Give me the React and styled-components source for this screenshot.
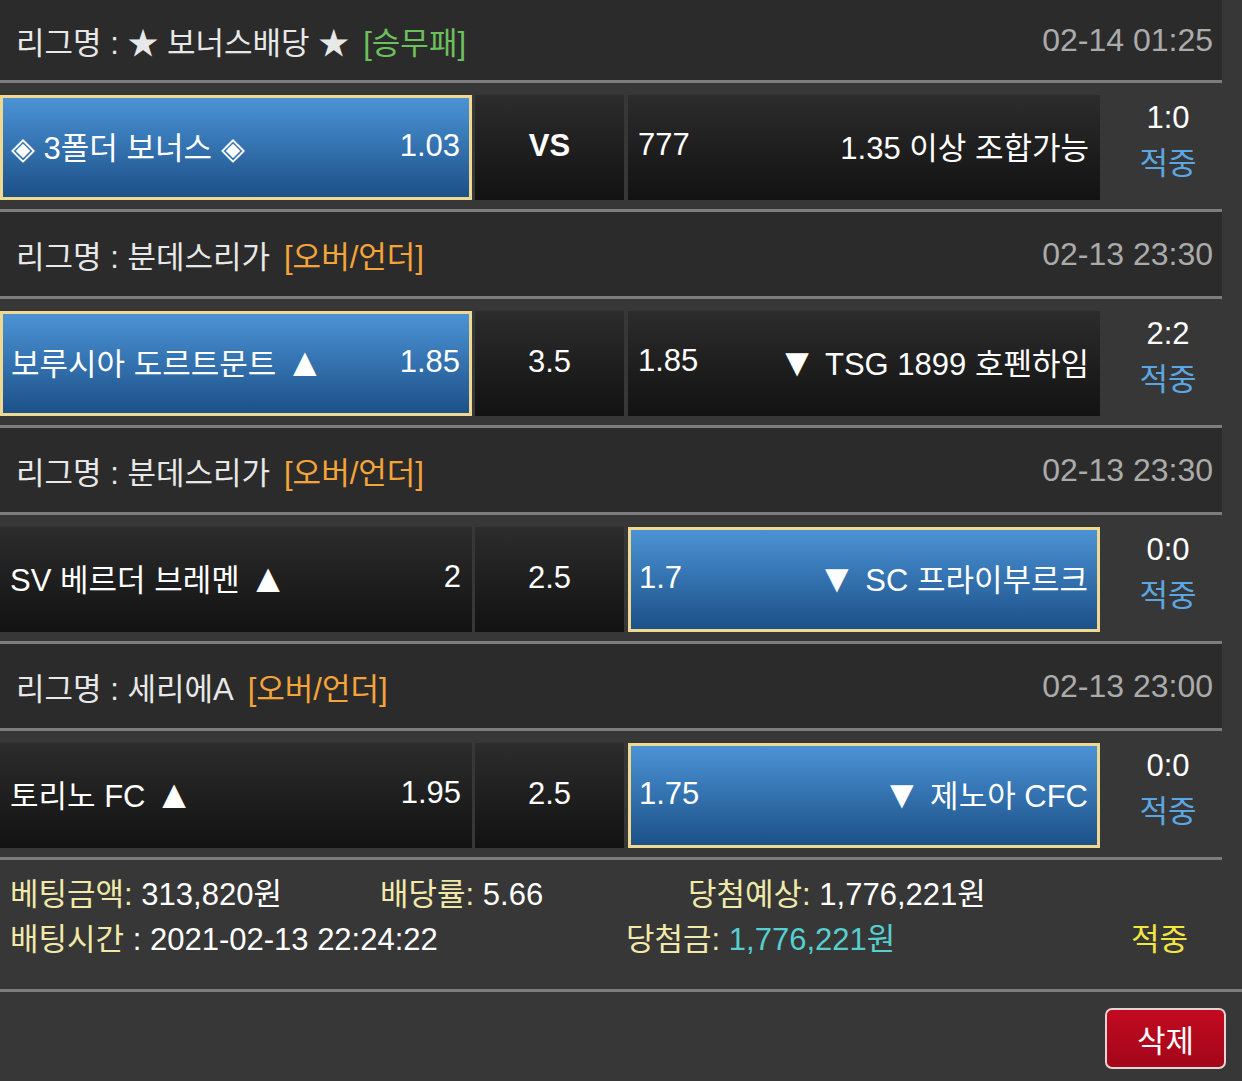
import React from 'react';
import styled, { createGlobalStyle, css } from 'styled-components';

const GlobalStyle = createGlobalStyle`
  body {
    margin: 0;
    background: #373737;
    font-family: "Liberation Sans", "Noto Sans CJK KR", sans-serif;
    color: #fff;
  }
`

const Page = styled.div`
  width: 1242px;
  font-size: 31px;
`

const Board = styled.div`
  width: 1222px;
`

const LeagueHeader = styled.div`
  display: flex;
  align-items: center;
  justify-content: space-between;
  box-sizing: border-box;
  height: ${props => (props.first ? '83px' : '87px')};
  padding: 0 9px 0 16px;
  background: #2b2b2b;
  border-bottom: 3px solid #7d7d7d;
`

const LeagueName = styled.div`
  color: #e8e8e8;
  white-space: pre;
`

const Tag = styled.span`
  margin-left: 14px;
  color: ${props => props.color};
`

const DateText = styled.div`
  color: #ababab;
  font-size: 32px;
`

const MatchRow = styled.div`
  display: flex;
  height: 129px;
  padding: 12px 0 9px;
  box-sizing: border-box;
  background: #373737;
  border-bottom: 3px solid #7d7d7d;
`

const Cell = styled.div`
  display: flex;
  align-items: center;
  justify-content: space-between;
  box-sizing: border-box;
  width: ${props => props.width}px;
  margin-right: ${props => props.gap || 0}px;
  padding: 0 11px 5px 10px;
  background: linear-gradient(#2c2c2c, #121212);
  color: #fff;
  white-space: pre;

  ${props =>
    props.center &&
    css`
      justify-content: center;
      padding: 0 0 4px;
    `}

  ${props =>
    props.bold &&
    css`
      font-weight: 700;
    `}

  ${props =>
    props.selected &&
    css`
      background: linear-gradient(#4b93d5, #1c5088);
      border: 3px solid #efd990;
      padding: 0 9px 4px 8px;
    `}
`

const Arrow = styled.span`
  font-size: 40px;
  line-height: 1;
  vertical-align: -1px;
`

const ScoreCol = styled.div`
  flex: 1;
  display: flex;
  flex-direction: column;
  align-items: center;
  padding-left: 14px;
  line-height: 46px;
`

const Score = styled.div`
  color: #fff;
`

const Result = styled.div`
  color: #5ca7e2;
`

const Summary = styled.div`
  padding: 12px 0 0;
  height: 132px;
  box-sizing: border-box;
  border-bottom: 3px solid #7d7d7d;
`

const SummaryLine = styled.div`
  display: grid;
  grid-template-columns: ${props => props.cols};
  line-height: 45px;
  padding-left: 10px;
`

const Label = styled.span`
  color: #f1e9a9;
`

const Value = styled.span`
  color: ${props => props.color || '#fff'};
`

const Hit = styled.span`
  color: #f2e640;
`

const Footer = styled.div`
  display: flex;
  justify-content: flex-end;
  padding: 16px 16px 0 0;
`

const DeleteButton = styled.button`
  width: 121px;
  height: 61px;
  border: 2px solid #e6d3d3;
  border-radius: 7px;
  background: linear-gradient(#c20a20, #a3061a);
  color: #fff;
  font-family: inherit;
  font-size: 31px;
  cursor: pointer;
`

const games = [
  {
    league: '리그명 : ★ 보너스배당 ★',
    tag: '[승무패]',
    tagColor: '#6cc05c',
    date: '02-14 01:25',
    home: '◈ 3폴더 보너스 ◈',
    homeOdd: '1.03',
    mid: 'VS',
    bold: true,
    away: '1.35 이상 조합가능',
    awayOdd: '777',
    pick: 'home',
    score: '1:0',
  },
  {
    league: '리그명 : 분데스리가',
    tag: '[오버/언더]',
    tagColor: '#f5a43a',
    date: '02-13 23:30',
    home: '보루시아 도르트문트',
    homeOdd: '1.85',
    mid: '3.5',
    away: 'TSG 1899 호펜하임',
    awayOdd: '1.85',
    arrows: true,
    pick: 'home',
    score: '2:2',
  },
  {
    league: '리그명 : 분데스리가',
    tag: '[오버/언더]',
    tagColor: '#f5a43a',
    date: '02-13 23:30',
    home: 'SV 베르더 브레멘',
    homeOdd: '2',
    mid: '2.5',
    away: 'SC 프라이부르크',
    awayOdd: '1.7',
    arrows: true,
    pick: 'away',
    score: '0:0',
  },
  {
    league: '리그명 : 세리에A',
    tag: '[오버/언더]',
    tagColor: '#f5a43a',
    date: '02-13 23:00',
    home: '토리노 FC',
    homeOdd: '1.95',
    mid: '2.5',
    away: '제노아 CFC',
    awayOdd: '1.75',
    arrows: true,
    pick: 'away',
    score: '0:0',
  },
]

function App() {
  return (
    <Page>
      <GlobalStyle />
      <Board>
        {games.map((g, i) => (
          <React.Fragment key={i}>
            <LeagueHeader first={i === 0}>
              <LeagueName>
                {g.league}
                <Tag color={g.tagColor}>{g.tag}</Tag>
              </LeagueName>
              <DateText>{g.date}</DateText>
            </LeagueHeader>
            <MatchRow>
              <Cell width={472} gap={3} selected={g.pick === 'home'}>
                <span>
                  {g.home}
                  {g.arrows && <> <Arrow>▲</Arrow></>}
                </span>
                <span>{g.homeOdd}</span>
              </Cell>
              <Cell width={149} gap={4} center bold={g.bold}>
                {g.mid}
              </Cell>
              <Cell width={472} selected={g.pick === 'away'}>
                <span>{g.awayOdd}</span>
                <span>
                  {g.arrows && <><Arrow>▼</Arrow> </>}
                  {g.away}
                </span>
              </Cell>
              <ScoreCol>
                <Score>{g.score}</Score>
                <Result>적중</Result>
              </ScoreCol>
            </MatchRow>
          </React.Fragment>
        ))}
      </Board>
      <Summary>
        <SummaryLine cols="370px 308px auto">
          <span><Label>베팅금액:</Label> <Value>313,820원</Value></span>
          <span><Label>배당률:</Label> <Value>5.66</Value></span>
          <span><Label>당첨예상:</Label> <Value>1,776,221원</Value></span>
        </SummaryLine>
        <SummaryLine cols="616px 505px auto">
          <span><Label>배팅시간</Label> <Value>: 2021-02-13 22:24:22</Value></span>
          <span><Label>당첨금:</Label> <Value color="#55cfcf">1,776,221원</Value></span>
          <Hit>적중</Hit>
        </SummaryLine>
      </Summary>
      <Footer>
        <DeleteButton>삭제</DeleteButton>
      </Footer>
    </Page>
  )
}

export default App
